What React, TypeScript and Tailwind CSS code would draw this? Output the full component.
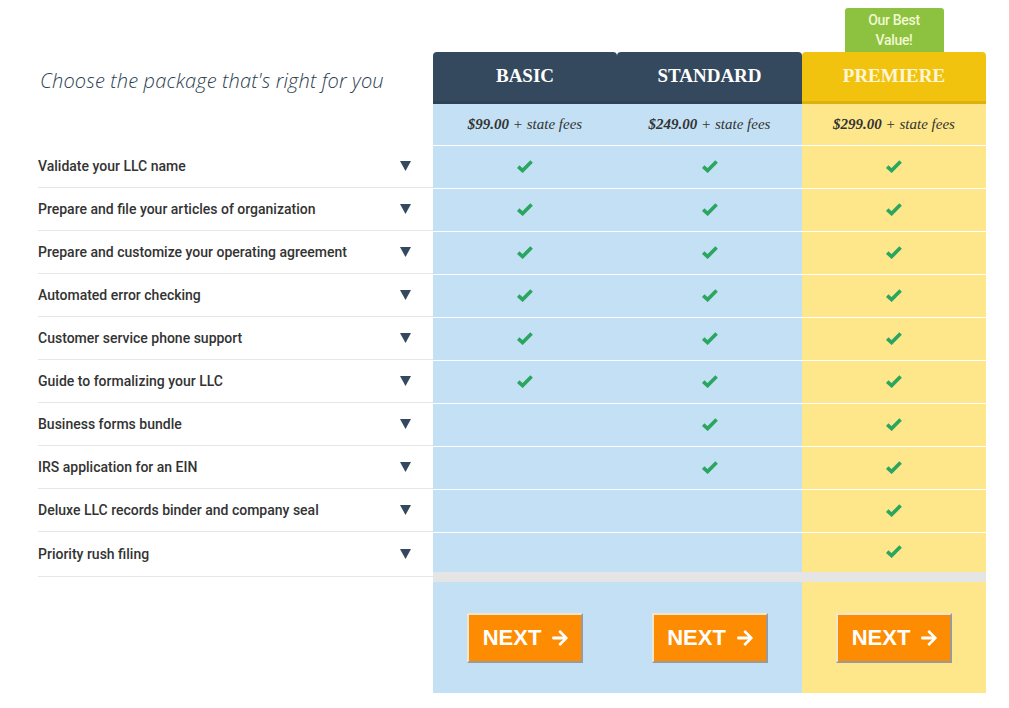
import { FaArrowRight } from 'react-icons/fa'

const features = [
  'Validate your LLC name',
  'Prepare and file your articles of organization',
  'Prepare and customize your operating agreement',
  'Automated error checking',
  'Customer service phone support',
  'Guide to formalizing your LLC',
  'Business forms bundle',
  'IRS application for an EIN',
  'Deluxe LLC records binder and company seal',
  'Priority rush filing',
]

type Plan = {
  name: string
  price: string
  included: number
  premiere?: boolean
  width: string
}

const plans: Plan[] = [
  { name: 'BASIC', price: '$99.00', included: 6, width: 'w-[184px]' },
  { name: 'STANDARD', price: '$249.00', included: 8, width: 'w-[185px]' },
  { name: 'PREMIERE', price: '$299.00', included: 10, premiere: true, width: 'w-[184px]' },
]

function Check() {
  return (
    <svg width="16" height="13" viewBox="0 0 16 13" className="-mt-[2px]">
      <path d="M1.2 6.6 L5.6 10.6 L14.6 1.6" fill="none" stroke="#2aa660" strokeWidth="3.6" />
    </svg>
  )
}

function PlanColumn({ plan }: { plan: Plan }) {
  const bg = plan.premiere ? 'bg-[#fee78a]' : 'bg-[#c3e0f4]'
  return (
    <div className={`flex flex-col ${plan.width}`}>
      <div className="h-[52px] pt-[8px] flex justify-center">
        {plan.premiere && (
          <div className="w-[99px] h-[44px] bg-[#8cc23f] rounded-t-[3px] flex flex-col items-center justify-center text-[14px] leading-[20px] font-medium tracking-[-0.3px] text-[#f2f8d2] font-['Roboto',sans-serif]">
            <span>Our Best</span>
            <span>Value!</span>
          </div>
        )}
      </div>
      <div
        className={`h-[52px] rounded-t-[4px] flex items-center justify-center font-['Liberation_Serif',serif] font-bold text-[19px] border-b-[3px] ${
          plan.premiere
            ? 'bg-[#f1c30f] border-[#ddb10d] text-[#fff6d8]'
            : 'bg-[#34495e] border-[#2e4155] text-white'
        }`}
      >
        {plan.name}
      </div>
      <div className={`h-[41px] ${bg} flex items-center justify-center font-['Liberation_Serif',serif] italic text-[15px] text-[#333]`}>
        <span className="font-bold">{plan.price}</span>
        <span>&nbsp;+ state fees</span>
      </div>
      {features.map((f, i) => (
        <div
          key={f}
          className={`${i === features.length - 1 ? 'h-[40px]' : 'h-[43px]'} ${bg} border-t border-white flex items-center justify-center`}
        >
          {i < plan.included && <Check />}
        </div>
      ))}
      <div className="h-[10px] bg-[#e5e5e5]" />
      <div className={`h-[111px] ${bg} flex items-center justify-center`}>
        <button className="w-[116px] h-[50px] bg-[#fd8c02] border-2 border-t-[#f3e6cf] border-l-[#f3e6cf] border-b-[#9a9a9a] border-r-[#9a9a9a] flex items-center justify-center gap-[10px] pl-[2px] text-white font-['Liberation_Sans',sans-serif] font-bold text-[22px]">
          <span>NEXT</span>
          <FaArrowRight className="w-[18px] h-[18px]" />
        </button>
      </div>
    </div>
  )
}

export default function App() {
  return (
    <div className="w-[1009px] h-[708px] bg-white flex pl-[38px]">
      <div className="w-[395px] flex flex-col">
        <div className="h-[52px]" />
        <div className="h-[52px] flex items-center pl-[2px] pt-[6px]">
          <h1 className="font-['Open_Sans',sans-serif] italic font-light text-[20px] text-[#2c3e50] tracking-[0.15px]">
            Choose the package that's right for you
          </h1>
        </div>
        <div className="h-[41px]" />
        {features.map((f, i) => (
          <div
            key={f}
            className={`${i === features.length - 1 ? 'h-[45px]' : 'h-[43px]'} border-b border-[#e6e6e6] flex items-center justify-between pr-[22px]`}
          >
            <span className="font-['Roboto',sans-serif] font-medium text-[14px] text-[#333]">{f}</span>
            <svg width="11" height="10" viewBox="0 0 11 10">
              <path d="M0 0 H11 L5.5 10 Z" fill="#34495e" />
            </svg>
          </div>
        ))}
      </div>
      {plans.map((p) => (
        <PlanColumn key={p.name} plan={p} />
      ))}
    </div>
  )
}
